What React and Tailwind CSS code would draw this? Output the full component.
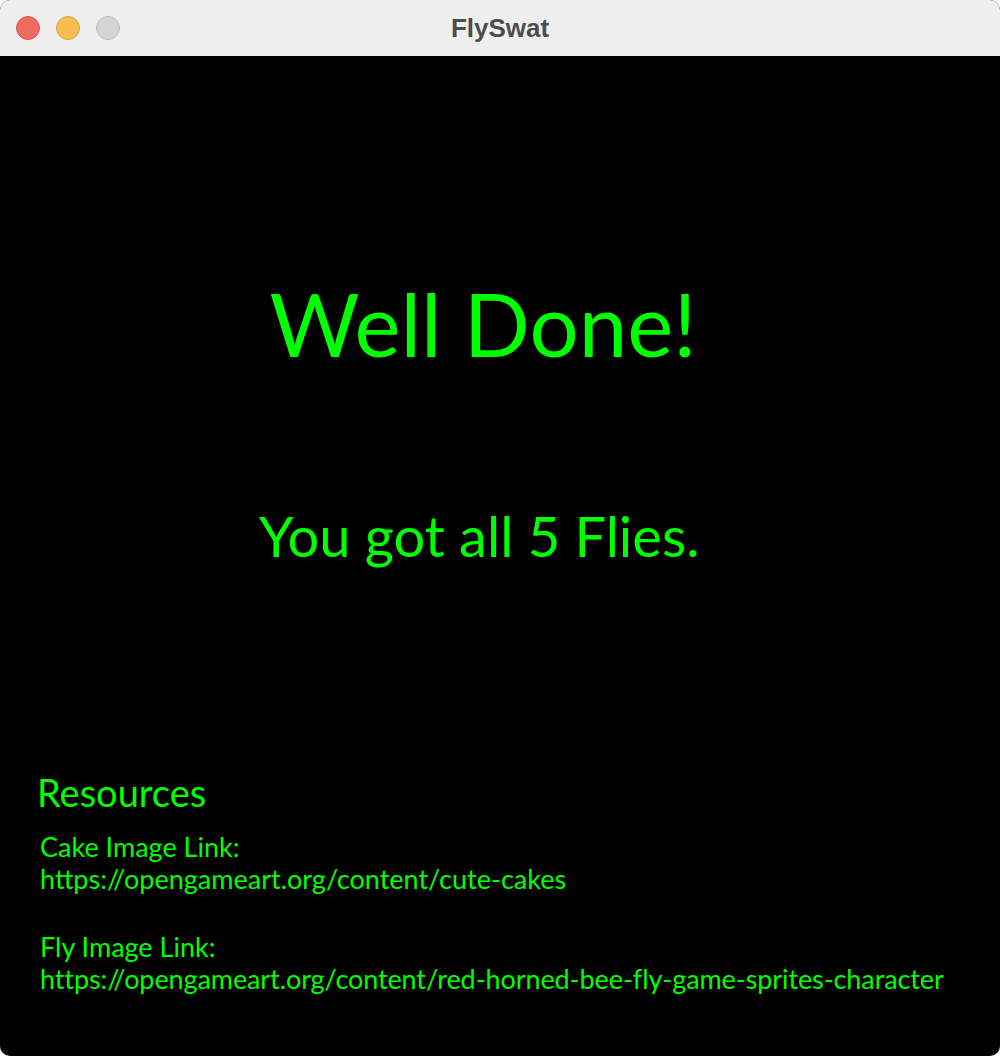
export default function App() {
  const font = { fontFamily: '"Lato", "Noto Sans", sans-serif' };
  return (
    <div className="w-[1000px] h-[1056px] bg-white">
      <div className="w-full h-full rounded-[10px] overflow-hidden flex flex-col bg-black">
        <div className="h-[56px] bg-[#efefef] flex items-center relative shrink-0">
          <div className="flex items-center gap-4 pl-4">
            <div className="w-6 h-6 rounded-full bg-[#ee6a5f] border border-[#d25a50]" />
            <div className="w-6 h-6 rounded-full bg-[#f5bf4f] border border-[#d9a53e]" />
            <div className="w-6 h-6 rounded-full bg-[#d6d4d4] border border-[#bfbdbd]" />
          </div>
          <div
            className="absolute left-0 right-0 text-center text-[26px] leading-[56px] font-bold text-[#4d4d4d]"
            style={{ fontFamily: '"Liberation Sans", Arial, sans-serif' }}
          >
            FlySwat
          </div>
        </div>
        <div className="flex-1 flex flex-col text-[#00ff00]" style={font}>
          <div className="pt-[224px] text-center pr-[34px] text-[87px] leading-[87px]">Well Done!</div>
          <div className="pt-[141px] text-center pr-[42px] text-[56px] leading-[56px]">You got all 5 Flies.</div>
          <div className="pt-[208px] pl-[37px] text-[38px] leading-[40px]">Resources</div>
          <div className="pt-[19px] pl-[40px] text-[27px] leading-[32px]">
            <div>Cake Image Link:</div>
            <div>https://opengameart.org/content/cute-cakes</div>
            <div className="mt-[36px]">Fly Image Link:</div>
            <div className="tracking-[-0.1px]">https://opengameart.org/content/red-horned-bee-fly-game-sprites-character</div>
          </div>
        </div>
      </div>
    </div>
  );
}
